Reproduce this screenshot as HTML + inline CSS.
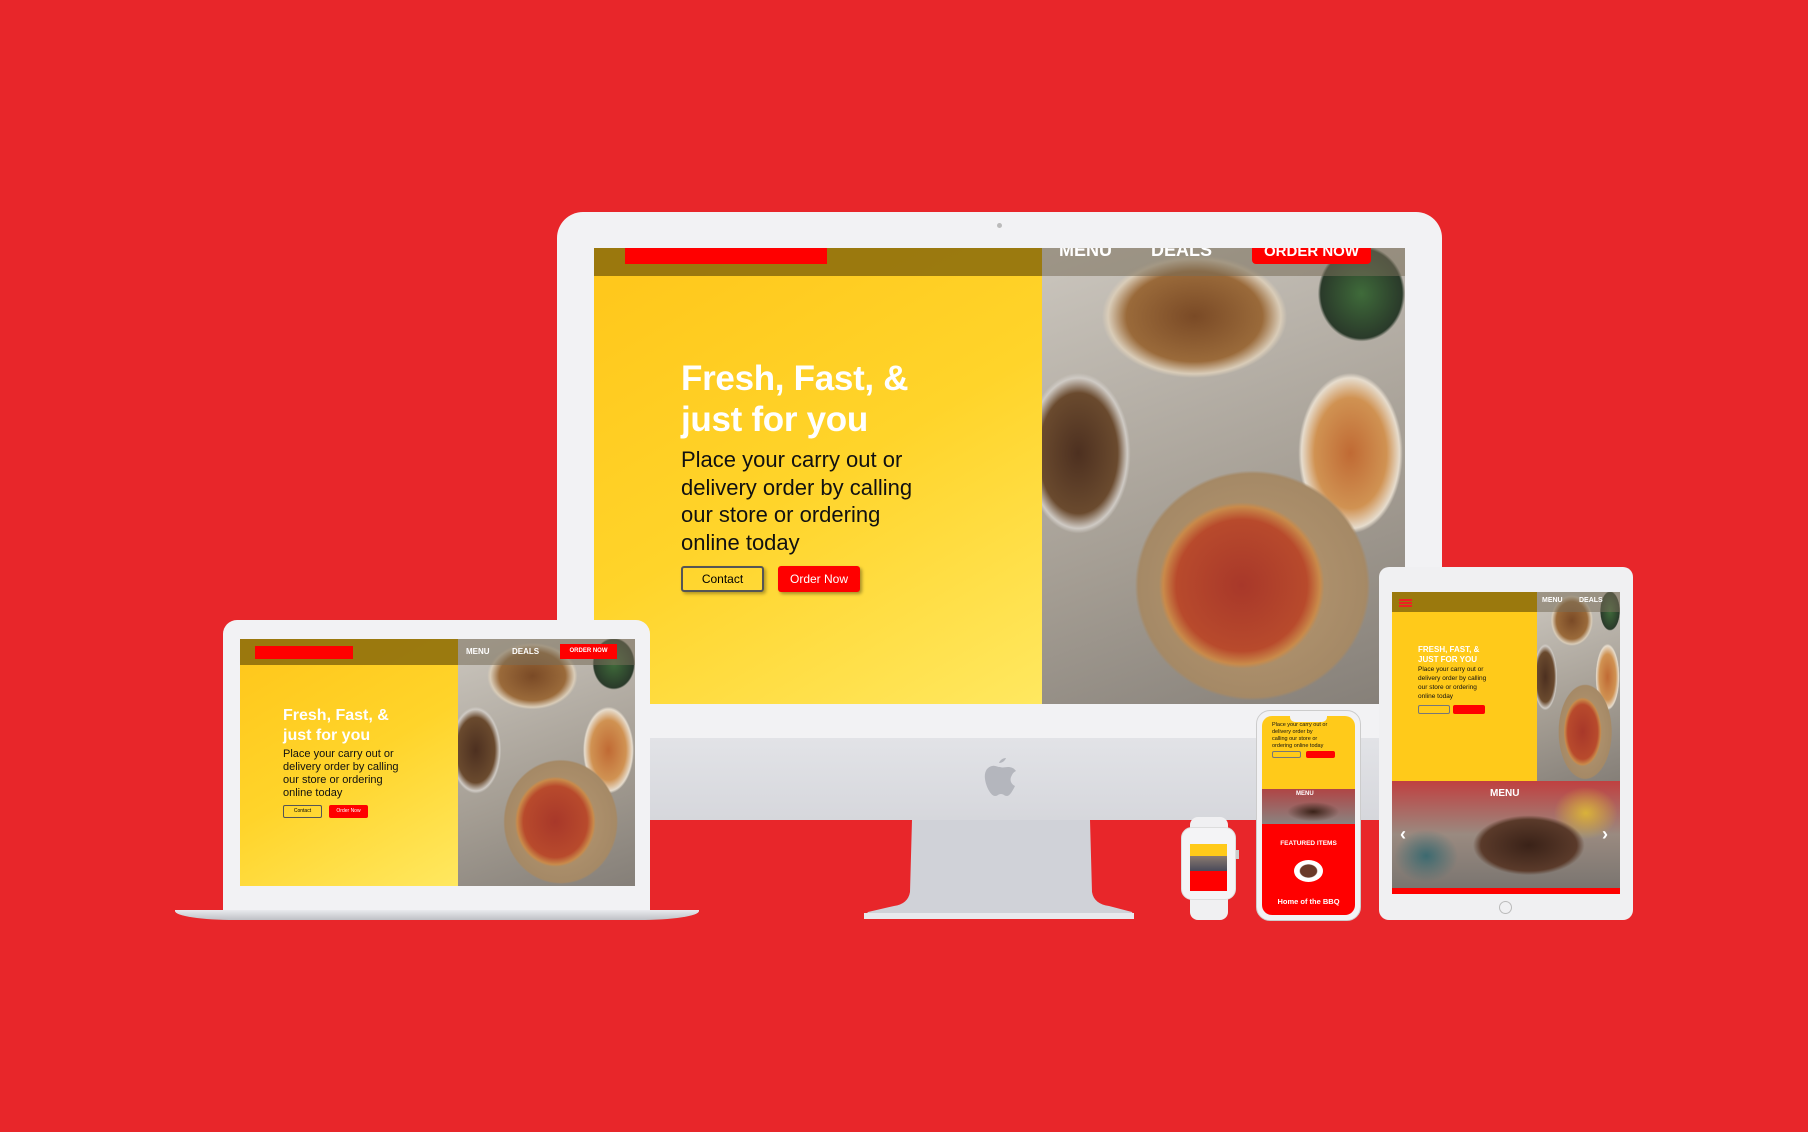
<!DOCTYPE html>
<html><head><meta charset="utf-8"><style>
*{margin:0;padding:0;box-sizing:border-box}
body{width:1808px;height:1132px;background:#E8262A;position:relative;overflow:hidden;font-family:"Liberation Sans",Arial,sans-serif}
.abs{position:absolute}
.food{background:
radial-gradient(ellipse 30% 24% at 55% 74%,#a8382a 0,#b84a2c 60%,#c98a4a 72%,rgba(0,0,0,0) 76%),
radial-gradient(ellipse 45% 35% at 58% 74%,#b89a74 0,#a58966 70%,rgba(0,0,0,0) 72%),
radial-gradient(ellipse 16% 14% at 88% 10%,#3f6b3a 0,#2a3a2a 70%,rgba(0,0,0,0) 75%),
radial-gradient(ellipse 34% 18% at 42% 15%,#7a4a26 0,#9a6a3a 55%,#d9ccb8 70%,rgba(0,0,0,0) 75%),
radial-gradient(ellipse 18% 22% at 85% 45%,#c06a34 0,#d09252 55%,#e6dccd 75%,rgba(0,0,0,0) 80%),
radial-gradient(ellipse 18% 22% at 10% 45%,#4d3020 0,#6a4a2e 60%,#cfcac4 75%,rgba(0,0,0,0) 80%),
linear-gradient(160deg,#cbc6be,#a39c92 60%,#857f78)}
.yel{background:linear-gradient(150deg,#ffc61a 0%,#ffd42a 50%,#ffe860 100%)}
.nav{background:rgba(130,100,10,.8)}
.navr{background:rgba(120,110,90,.55)}
.red{background:#ff0000}
</style></head><body>

<!-- iMac -->
<div class="abs" style="left:557px;top:212px;width:885px;height:608px;background:#f2f2f4;border-radius:26px 26px 0 0"></div>
<div class="abs" style="left:557px;top:738px;width:885px;height:82px;background:linear-gradient(#e2e3e7,#d6d7dc)"></div>
<div class="abs" style="left:997px;top:223px;width:5px;height:5px;border-radius:50%;background:#bbb"></div>
<svg class="abs" style="left:982px;top:756px" width="36" height="42" viewBox="0 0 36 42"><path d="M24 2c-3 0-6 2-7 5 3 0 6-2 7-5zM18 11c-3 0-5-2-8-1-5 1-8 6-7 13 1 8 6 17 10 17 3 0 3-2 6-2s3 2 6 2c3 0 6-6 8-10-4-2-6-6-3-11 1-2 2-3 4-4-2-3-5-4-8-4-3 0-5 1-8 0z" fill="#b4b6bd"/></svg>
<svg class="abs" style="left:864px;top:820px" width="270" height="102"><path d="M48 0H226L228 72Q230 84 245 86L268 92Q270 96 264 98H4Q0 96 4 92L30 86Q44 84 46 72Z" fill="#d0d2d8"/><rect x="0" y="93" width="270" height="6" fill="#e8e9ed"/></svg>
<div class="abs" style="left:594px;top:248px;width:811px;height:456px;overflow:hidden">
 <div class="abs yel" style="left:0;top:0;width:448px;height:456px"></div>
 <div class="abs food" style="left:448px;top:0;width:363px;height:456px"></div>
 <div class="abs nav" style="left:0;top:0;width:448px;height:28px"></div>
 <div class="abs navr" style="left:448px;top:0;width:363px;height:28px"></div>
 <div class="abs red" style="left:31px;top:0;width:202px;height:16px"></div>
 <div class="abs" style="left:465px;top:-8px;color:#fff;font-size:18px;font-weight:bold">MENU</div>
 <div class="abs" style="left:557px;top:-8px;color:#fff;font-size:18px;font-weight:bold">DEALS</div>
 <div class="abs red" style="left:658px;top:0;width:119px;height:16px;border-radius:0 0 4px 4px;color:#fff;font-size:15px;font-weight:bold;text-align:center;line-height:0;padding-top:4px">ORDER NOW</div>
 <div class="abs" style="left:87px;top:110px;color:#fff;font-size:35px;font-weight:bold;line-height:41px;letter-spacing:-.3px">Fresh, Fast, &amp;<br>just for you</div>
 <div class="abs" style="left:87px;top:198px;color:#111;font-size:22px;line-height:27.5px">Place your carry out or<br>delivery order by calling<br>our store or ordering<br>online today</div>
 <div class="abs" style="left:87px;top:318px;width:83px;height:26px;border:2px solid #555;border-radius:3px;font-size:12px;text-align:center;line-height:22px;box-shadow:2px 2px 3px rgba(0,0,0,.3)">Contact</div>
 <div class="abs red" style="left:184px;top:318px;width:82px;height:26px;border-radius:3px;color:#fff;font-size:12px;text-align:center;line-height:26px;box-shadow:2px 2px 3px rgba(0,0,0,.35)">Order Now</div>
</div>

<!-- Laptop -->
<div class="abs" style="left:223px;top:620px;width:427px;height:292px;background:#f2f2f4;border-radius:14px 14px 0 0"></div>
<div class="abs" style="left:175px;top:910px;width:524px;height:10px;background:linear-gradient(#e9eaee,#bfc1c6);border-radius:0 0 60px 60px/0 0 9px 9px"></div>
<div class="abs" style="left:240px;top:639px;width:395px;height:247px;overflow:hidden">
 <div class="abs yel" style="left:0;top:0;width:218px;height:247px"></div>
 <div class="abs food" style="left:218px;top:0;width:177px;height:247px"></div>
 <div class="abs nav" style="left:0;top:0;width:218px;height:26px"></div>
 <div class="abs navr" style="left:218px;top:0;width:177px;height:26px"></div>
 <div class="abs red" style="left:15px;top:7px;width:98px;height:13px"></div>
 <div class="abs" style="left:226px;top:8px;color:#fff;font-size:8px;font-weight:bold">MENU</div>
 <div class="abs" style="left:272px;top:8px;color:#fff;font-size:8px;font-weight:bold">DEALS</div>
 <div class="abs red" style="left:320px;top:5px;width:57px;height:15px;color:#fff;font-size:6px;font-weight:bold;text-align:center;line-height:15px">ORDER NOW</div>
 <div class="abs" style="left:43px;top:67px;color:#fff;font-size:16px;font-weight:bold;line-height:20px">Fresh, Fast, &amp;<br>just for you</div>
 <div class="abs" style="left:43px;top:109px;color:#111;font-size:11px;line-height:13px">Place your carry out or<br>delivery order by calling<br>our store or ordering<br>online today</div>
 <div class="abs" style="left:43px;top:166px;width:39px;height:13px;border:1px solid #555;border-radius:2px;font-size:5px;text-align:center;line-height:11px">Contact</div>
 <div class="abs red" style="left:89px;top:166px;width:39px;height:13px;border-radius:2px;color:#fff;font-size:5px;text-align:center;line-height:13px">Order Now</div>
</div>

<!-- Tablet -->
<div class="abs" style="left:1379px;top:567px;width:254px;height:353px;background:#f0f0f2;border-radius:10px"></div>
<div class="abs" style="left:1499px;top:901px;width:13px;height:13px;border-radius:50%;border:1px solid #bbb"></div>
<div class="abs" style="left:1392px;top:592px;width:228px;height:302px;overflow:hidden">
 <div class="abs" style="left:0;top:0;width:145px;height:189px;background:#ffca1a"></div>
 <div class="abs food" style="left:145px;top:0;width:83px;height:189px"></div>
 <div class="abs nav" style="left:0;top:0;width:145px;height:20px"></div>
 <div class="abs navr" style="left:145px;top:0;width:83px;height:20px"></div>
 <div class="abs" style="left:7px;top:7px;width:13px;height:8px;border-top:2px solid #e22;border-bottom:2px solid #e22"></div>
 <div class="abs" style="left:7px;top:10px;width:13px;height:2px;background:#e22"></div>
 <div class="abs" style="left:150px;top:5px;color:#fff;font-size:7px;font-weight:bold">MENU</div>
 <div class="abs" style="left:187px;top:5px;color:#fff;font-size:7px;font-weight:bold">DEALS</div>
 <div class="abs" style="left:26px;top:53px;color:#fff;font-size:8px;font-weight:bold;line-height:10px">FRESH, FAST, &amp;<br>JUST FOR YOU</div>
 <div class="abs" style="left:26px;top:73px;color:#111;font-size:6.5px;line-height:9px">Place your carry out or<br>delivery order by calling<br>our store or ordering<br>online today</div>
 <div class="abs" style="left:26px;top:113px;width:32px;height:9px;border:1px solid #777;border-radius:2px"></div>
 <div class="abs red" style="left:61px;top:113px;width:32px;height:9px;border-radius:2px"></div>
 <div class="abs" style="left:0;top:189px;width:228px;height:107px;background:radial-gradient(ellipse 35% 40% at 60% 60%,#3a2218,#5a3a2a 60%,rgba(0,0,0,0) 70%),radial-gradient(ellipse 20% 35% at 85% 30%,#d9b23a,rgba(0,0,0,0) 70%),radial-gradient(ellipse 20% 35% at 15% 70%,#3c6a70,rgba(0,0,0,0) 70%),linear-gradient(#c04040,#9a8a80 50%,#7a7570)"></div>
 <div class="abs" style="left:98px;top:196px;color:#fff;font-size:10px;font-weight:bold">MENU</div>
 <div class="abs" style="left:8px;top:232px;color:#fff;font-size:18px;font-weight:bold">‹</div>
 <div class="abs" style="left:210px;top:232px;color:#fff;font-size:18px;font-weight:bold">›</div>
 <div class="abs red" style="left:0;top:296px;width:228px;height:6px"></div>
</div>

<!-- Phone -->
<div class="abs" style="left:1256px;top:710px;width:105px;height:211px;background:#f2f2f4;border-radius:14px;border:1px solid #ccc"></div>
<div class="abs" style="left:1262px;top:716px;width:93px;height:199px;overflow:hidden;border-radius:10px">
 <div class="abs" style="left:0;top:0;width:93px;height:73px;background:#ffca1a"></div>
 <div class="abs" style="left:28px;top:0;width:37px;height:6px;background:#f2f2f4;border-radius:0 0 5px 5px"></div>
 <div class="abs" style="left:10px;top:6px;color:#111;font-size:5.5px;line-height:7px">Place your carry out or<br>delivery order by<br>calling our store or<br>ordering online today</div>
 <div class="abs" style="left:10px;top:35px;width:29px;height:7px;border:1px solid #777;border-radius:2px"></div>
 <div class="abs red" style="left:44px;top:35px;width:29px;height:7px;border-radius:2px"></div>
 <div class="abs" style="left:0;top:73px;width:93px;height:35px;background:radial-gradient(ellipse 40% 40% at 55% 65%,#3a2218,rgba(0,0,0,0) 70%),linear-gradient(#b04545,#8a8380)"></div>
 <div class="abs" style="left:34px;top:75px;color:#fff;font-size:6px;font-weight:bold">MENU</div>
 <div class="abs red" style="left:0;top:108px;width:93px;height:91px"></div>
 <div class="abs" style="left:0;top:124px;width:93px;color:#fff;font-size:6.5px;font-weight:bold;text-align:center">FEATURED ITEMS</div>
 <div class="abs" style="left:32px;top:144px;width:29px;height:22px;border-radius:50%;background:radial-gradient(#6a3a2a 40%,#fff 45%)"></div>
 <div class="abs" style="left:0;top:181px;width:93px;color:#fff;font-size:7.5px;font-weight:bold;text-align:center">Home of the BBQ</div>
</div>

<!-- Watch -->
<div class="abs" style="left:1190px;top:817px;width:38px;height:103px;background:#f0f0f2;border-radius:8px"></div>
<div class="abs" style="left:1181px;top:827px;width:55px;height:73px;background:#f4f4f6;border-radius:11px;border:1px solid #ddd"></div>
<div class="abs" style="left:1236px;top:850px;width:3px;height:9px;background:#ccc"></div>
<div class="abs" style="left:1190px;top:844px;width:37px;height:47px;overflow:hidden">
 <div class="abs" style="left:0;top:0;width:37px;height:12px;background:#ffca1a"></div>
 <div class="abs" style="left:0;top:12px;width:37px;height:15px;background:linear-gradient(#8a7a70,#4a4a5a)"></div>
 <div class="abs red" style="left:0;top:27px;width:37px;height:20px"></div>
</div>
</body></html>
